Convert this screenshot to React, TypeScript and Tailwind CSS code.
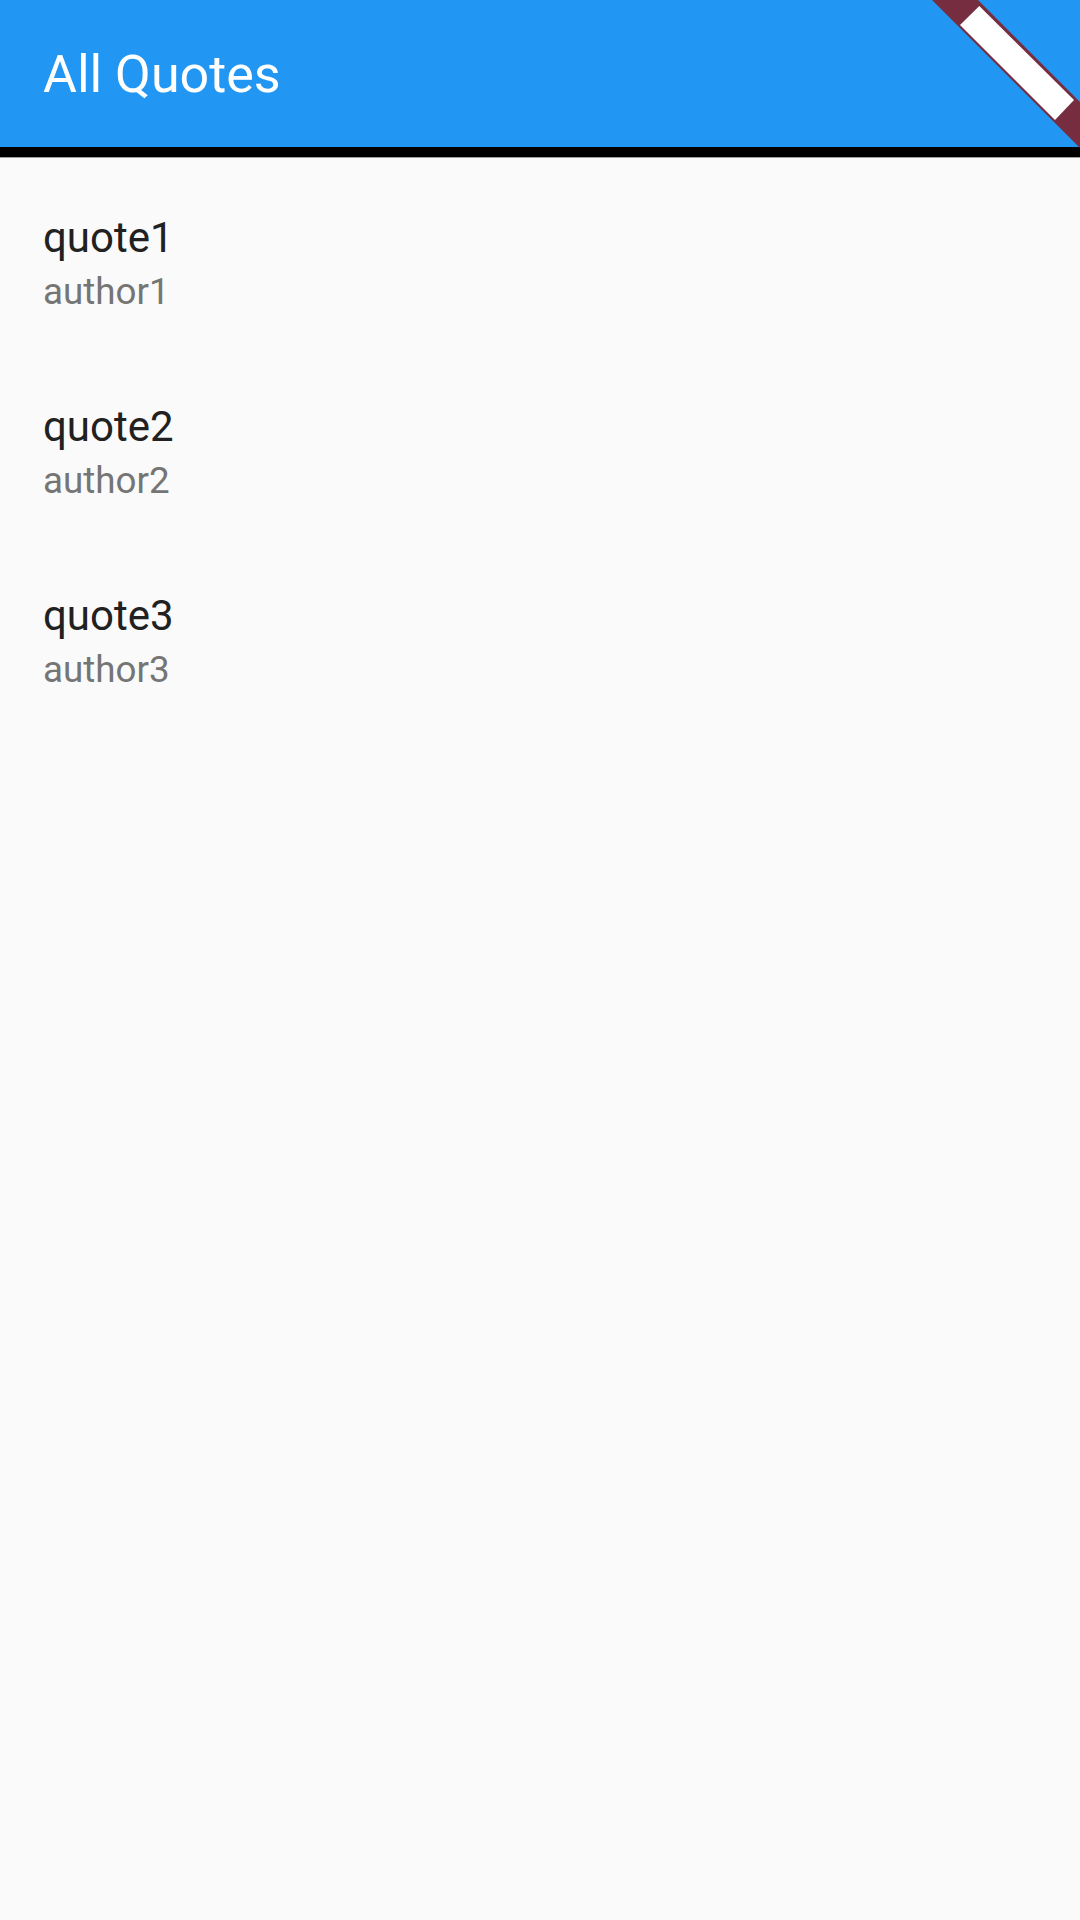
import React from "react";

interface IQuote {
  text: string;
  author: string;
}

const quotes: IQuote[] = [
  { text: "quote1", author: "author1" },
  { text: "quote2", author: "author2" },
  { text: "quote3", author: "author3" },
];

const QuoteTile: React.FC<{ quote: IQuote }> = ({ quote }) => {
  return (
    <div className="h-[189px] pt-[41px] px-[43px] flex flex-col">
      <p className="text-[42px] leading-[56px] text-[#212121]">{quote.text}</p>
      <p className="text-[36.75px] leading-[52px] text-[#757575]">
        {quote.author}
      </p>
    </div>
  );
};

// the red corner ribbon over the app bar
const DebugBanner = () => {
  return (
    <svg
      className="absolute top-0 right-0"
      width="148"
      height="148"
      viewBox="0 0 148 148"
    >
      <polygon points="0,0 46,0 148,102 148,148" fill="#762d3f" />
      <polygon points="28,25 47.3,6 142,100 123,120" fill="#ffffff" />
    </svg>
  );
};

export default function App() {
  return (
    <div
      className="w-[1080px] h-[1920px] bg-[#fafafa] flex flex-col relative overflow-hidden"
      style={{ fontFamily: "Roboto, 'Liberation Sans', sans-serif" }}
    >
      <div className="h-[147px] bg-[#2196f3] flex items-center pl-[43px] pt-[2px] shrink-0">
        <h1 className="text-[52px] text-white leading-none">All Quotes</h1>
      </div>
      <div className="h-[11px] bg-black shrink-0 border-b border-[#9e9e9e]" />
      <div className="pt-[11px] flex flex-col">
        {quotes.map((q) => (
          <QuoteTile key={q.text} quote={q} />
        ))}
      </div>
      <DebugBanner />
    </div>
  );
}
